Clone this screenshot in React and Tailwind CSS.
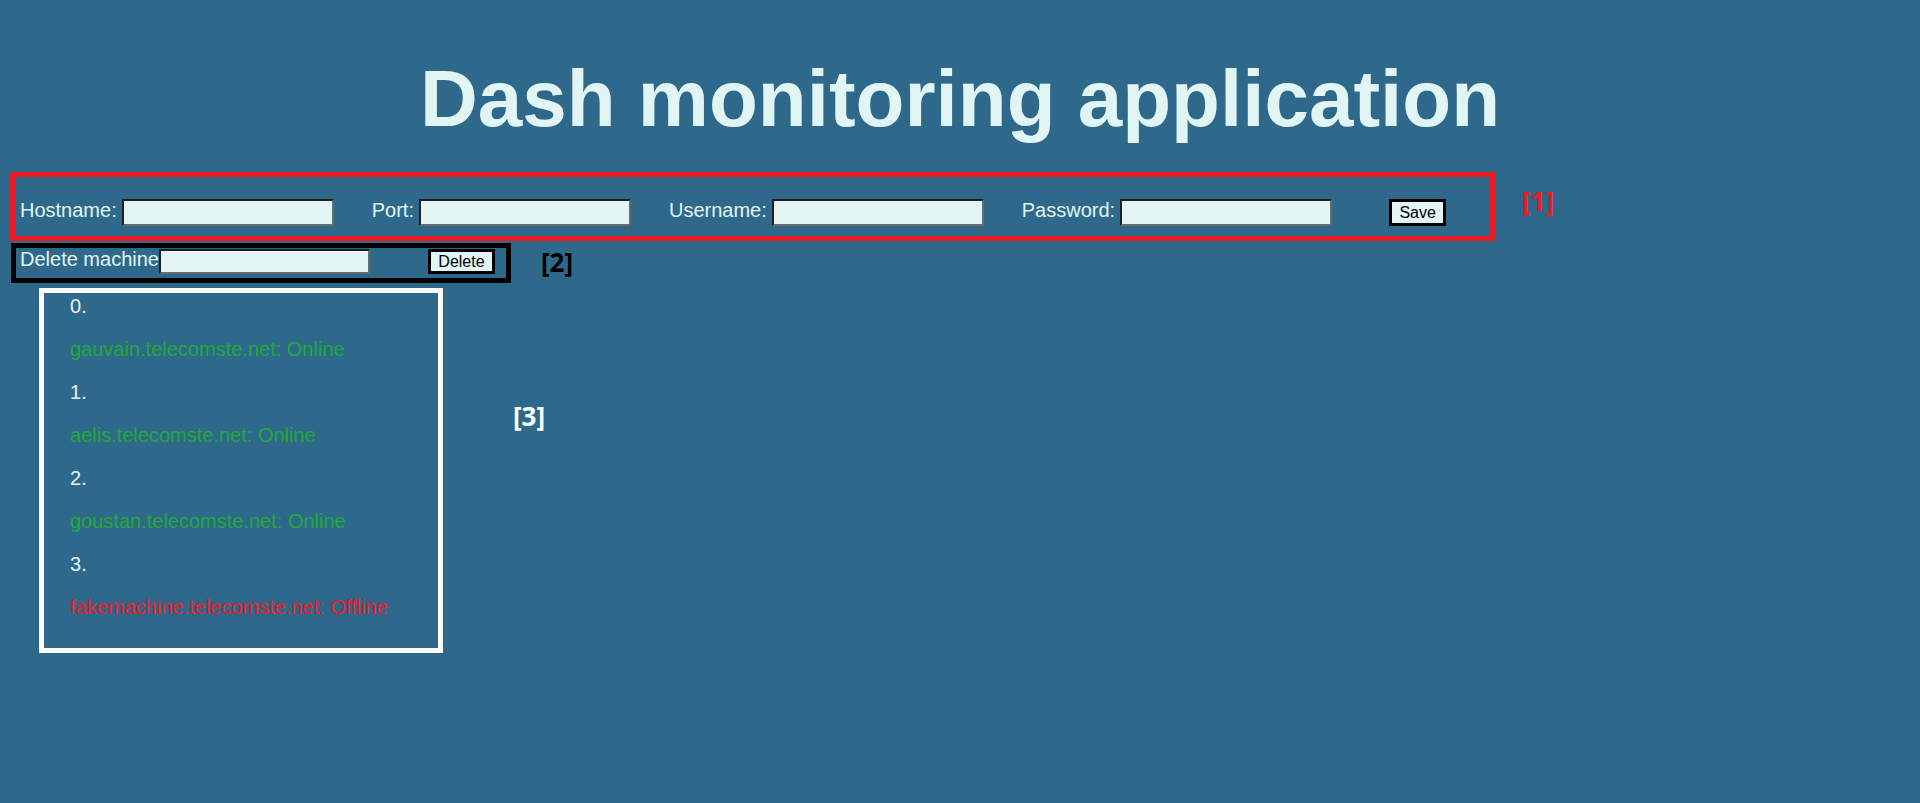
export default function App() {
  const machines = [
    { name: "gauvain.telecomste.net", online: true },
    { name: "aelis.telecomste.net", online: true },
    { name: "goustan.telecomste.net", online: true },
    { name: "fakemachine.telecomste.net", online: false },
  ];

  const Field = ({ label, first }) => (
    <div className={`flex items-start gap-[5px] ${first ? "" : "ml-[38px]"}`}>
      <span className="text-[20px] leading-[23px]">{label}</span>
      <input
        type="text"
        className="h-[27px] w-[212px] border-2 border-t-[#1f1f1f] border-l-[#1f1f1f] border-b-[#6a6a6a] border-r-[#6a6a6a] bg-[#e3f5f4] outline-none"
      />
    </div>
  );

  return (
    <div className="min-h-screen w-full bg-[#2e698c] font-['Liberation_Sans',Arial,sans-serif] text-[#e2f5f5]">
      <h1 className="pt-[53px] text-center text-[80px] font-bold leading-[92px]">
        Dash monitoring application
      </h1>

      <div className="mt-[27px] flex items-start">
        <div className="ml-[10px] flex h-[69px] w-[1485px] items-start border-[5px] border-[#ec1c24] pl-[5px] pt-[22px]">
          <Field label="Hostname:" first />
          <Field label="Port:" />
          <Field label="Username:" />
          <Field label="Password:" />
          <button className="ml-[57px] h-[27px] w-[57px] border-[3px] border-black bg-[#e3f5f4] text-[16px] leading-none text-black">
            Save
          </button>
        </div>
        <span className="ml-[27px] mt-[12px] font-['Open_Sans',sans-serif] text-[26px] font-bold leading-[34px] text-[#ec1c24]">
          [1]
        </span>
      </div>

      <div className="mt-[2px] flex items-start">
        <div className="ml-[11px] flex h-[40px] w-[500px] items-start border-[5px] border-black pl-[4px]">
          <span className="text-[20px] leading-[23px]">Delete machine</span>
          <input
            type="text"
            className="mt-[1px] h-[25px] w-[211px] border-2 border-t-[#1f1f1f] border-l-[#1f1f1f] border-b-[#6a6a6a] border-r-[#6a6a6a] bg-[#e3f5f4] outline-none"
          />
          <button className="ml-[58px] mt-[1px] h-[25px] w-[67px] border-[3px] border-black bg-[#e3f5f4] text-[16px] leading-none text-black">
            Delete
          </button>
        </div>
        <span className="ml-[30px] mt-[2px] font-['Open_Sans',sans-serif] text-[26px] font-bold leading-[34px] text-black">
          [2]
        </span>
      </div>

      <div className="mt-[5px] flex items-start">
        <div className="ml-[39px] flex h-[365px] w-[404px] flex-col gap-[20px] border-[5px] border-white pl-[26px] pt-[2px] text-[20px] leading-[23px]">
          {machines.map((m, i) => (
            <div key={m.name} className="flex flex-col gap-[20px]">
              <p>{i}.</p>
              <p className={m.online ? "text-[#24a839]" : "text-[#f01a24]"}>
                {m.name}: {m.online ? "Online" : "Offline"}
              </p>
            </div>
          ))}
        </div>
        <span className="ml-[70px] mt-[111px] font-['Open_Sans',sans-serif] text-[26px] font-bold leading-[34px] text-white">
          [3]
        </span>
      </div>
    </div>
  );
}
